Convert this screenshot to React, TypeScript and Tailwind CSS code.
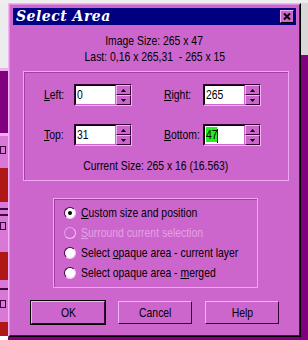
import React from "react";

const font = { fontFamily: '"Liberation Sans", Arial, sans-serif' };

const U = ({ children }: { children: React.ReactNode }) => <span className="underline underline-offset-1">{children}</span>;

// the dialog font is a narrow one, so squeeze Arial a bit
const N = ({ children, center }: { children: React.ReactNode; center?: boolean }) => (
  <span className={`inline-block whitespace-nowrap scale-x-[0.8] ${center ? "origin-center" : "origin-left"}`}>{children}</span>
);

const Spin = () => (
  <div className="flex flex-col w-[15px] h-[20px]">
    {[0, 1].map((i) => (
      <div
        key={i}
        className="flex-1 flex items-center justify-center bg-[#cc66cc] border border-t-[#f3b3f3] border-l-[#f3b3f3] border-b-[#330033] border-r-[#330033]"
      >
        <svg width="5" height="3" viewBox="0 0 5 3">
          {i === 0 ? <path d="M2.5 0 L5 3 L0 3 Z" fill="#000" /> : <path d="M0 0 L5 0 L2.5 3 Z" fill="#000" />}
        </svg>
      </div>
    ))}
  </div>
);

const Field = ({ value, hl }: { value: string; hl?: boolean }) => (
  <div className="flex w-[58px] h-[22px] border border-t-[#330033] border-l-[#330033] border-b-[#f3b3f3] border-r-[#f3b3f3]">
    <div className="flex-1 bg-white border border-t-black border-l-black border-b-[#cc66cc] border-r-[#cc66cc] px-[1px] text-[13px] leading-[18px]">
      <N>{hl ? <span className="bg-[#22ee22]">{value}</span> : value}</N>
      {hl && <span className="inline-block -ml-[3px] w-[1px] h-[14px] bg-black align-middle" />}
    </div>
    <Spin />
  </div>
);

const Radio = ({ checked, disabled, children }: { checked?: boolean; disabled?: boolean; children: React.ReactNode }) => (
  <div className={`flex items-center h-[20px] whitespace-nowrap ${disabled ? "text-[#e7a0e7]" : "text-black"}`}>
    <div
      className={`shrink-0 w-[12px] h-[12px] rounded-full flex items-center justify-center border border-t-[#440044] border-l-[#440044] border-b-[#f6c6f6] border-r-[#f6c6f6] ${disabled ? "bg-[#cc66cc] border-t-[#e7a0e7] border-l-[#e7a0e7]" : "bg-white"}`}
    >
      {checked && <div className="w-[4px] h-[4px] rounded-full bg-black" />}
    </div>
    <span className="ml-[5px] text-[13px] shrink-0">
      <N>{children}</N>
    </span>
  </div>
);

const Btn = ({ label, def }: { label: string; def?: boolean }) => (
  <div
    className={`w-[74px] h-[23px] flex items-center justify-center text-[13px] bg-[#cc66cc] border border-t-[#f3b3f3] border-l-[#f3b3f3] border-b-[#330033] border-r-[#330033] ${def ? "outline outline-1 outline-black" : ""}`}
  >
    <N center>{label}</N>
  </div>
);

export default function App() {
  return (
    <div className="w-[308px] h-[340px] bg-[#800080] overflow-hidden flex flex-col" style={font}>
      <div className="h-[3px] bg-[#eeeeee]" />
      <div className="flex flex-1">
        {/* left toolbar strip */}
        <div className="w-[8px] flex flex-col bg-[#d879d8]">
          <div className="h-[65px] bg-[#ececec]" />
          <div className="h-[3px] bg-[#f0b0f0]" />
          <div className="h-[62px] bg-[#800080]" />
          <div className="h-[3px] bg-[#f0b0f0]" />
          <div className="h-[10px]" />
          <div className="h-[8px] w-[6px] border border-[#400040]" />
          <div className="h-[14px]" />
          <div className="h-[34px] bg-[#b01818]" />
          <div className="h-[6px]" />
          <div className="h-[2px] bg-[#400040]" />
          <div className="h-[4px]" />
          <div className="h-[2px] bg-[#400040]" />
          <div className="h-[6px]" />
          <div className="h-[8px] w-[6px] border border-[#400040]" />
          <div className="h-[22px]" />
          <div className="h-[28px] bg-[#b01818]" />
          <div className="h-[8px]" />
          <div className="h-[2px] bg-[#400040]" />
          <div className="h-[10px]" />
          <div className="h-[8px] w-[6px] border border-[#400040]" />
          <div className="h-[14px]" />
          <div className="h-[14px] bg-[#b01818]" />
          <div className="flex-1 bg-white" />
        </div>

        {/* dialog */}
        <div className="w-[293px] h-[334px] bg-[#cc66cc] border border-t-[#f3b3f3] border-l-[#f3b3f3] border-b-black border-r-black flex flex-col text-black">
          <div className="flex-1 border border-t-[#e08ce0] border-l-[#e08ce0] border-b-[#660066] border-r-[#660066] p-[3px] flex flex-col">
            <div className="h-[17px] bg-[#000080] flex items-center justify-between pl-[3px] pr-[2px]">
              <span className="text-white text-[14px] italic font-bold tracking-[0.5px]" style={{ fontFamily: '"DejaVu Serif", serif' }}>
                Select Area
              </span>
              <div className="w-[14px] h-[13px] bg-[#cc66cc] border border-t-[#f3b3f3] border-l-[#f3b3f3] border-b-black border-r-black flex items-center justify-center">
                <svg width="8" height="7" viewBox="0 0 8 7">
                  <path d="M1 0.5 L7 6.5 M7 0.5 L1 6.5" stroke="#000" strokeWidth="2" />
                </svg>
              </div>
            </div>

            <div className="mt-[8px] text-[13px] leading-[16px] text-center">
              <N center>Image Size: 265 x 47</N>
            </div>
            <div className="text-[13px] leading-[16px] text-center">
              <N center>Last: 0,16 x 265,31&nbsp; - 265 x 15</N>
            </div>

            <div className="mt-[6px] ml-[10px] w-[266px] h-[110px] border border-[#f2a6f2] shadow-[inset_1px_1px_0_#a040a0] pt-[12px] pl-[20px]">
              <div className="grid grid-cols-[30px_58px_32px_39px_58px] gap-y-[18px] items-center text-[13px]">
                <N><U>L</U>eft:</N>
                <Field value="0" />
                <span />
                <N><U>R</U>ight:</N>
                <Field value="265" />
                <N><U>T</U>op:</N>
                <Field value="31" />
                <span />
                <N><U>B</U>ottom:</N>
                <Field value="47" hl />
              </div>
              <div className="mt-[12px] -ml-[20px] text-center text-[13px] leading-[16px]">
                <N center>Current Size: 265 x 16 (16.563)</N>
              </div>
            </div>

            <div className="mt-[17px] ml-[40px] w-[205px] h-[90px] border border-[#f2a6f2] shadow-[inset_1px_1px_0_#a040a0] pt-[4px] pl-[10px] overflow-visible">
              <Radio checked>
                <U>C</U>ustom size and position
              </Radio>
              <Radio disabled>
                <U>S</U>urround current selection
              </Radio>
              <Radio>
                Select <U>o</U>paque area - current layer
              </Radio>
              <Radio>
                Select opaque area - <U>m</U>erged
              </Radio>
            </div>

            <div className="mt-[13px] ml-[18px] flex gap-[13px]">
              <Btn label="OK" def />
              <Btn label="Cancel" />
              <Btn label="Help" />
            </div>
          </div>
        </div>

        {/* right strip */}
        <div className="flex-1 flex flex-col">
          <div className="h-[52px] bg-[#d8d8d8]" />
          <div className="flex-1 bg-[#800080]" />
        </div>
      </div>
    </div>
  );
}
